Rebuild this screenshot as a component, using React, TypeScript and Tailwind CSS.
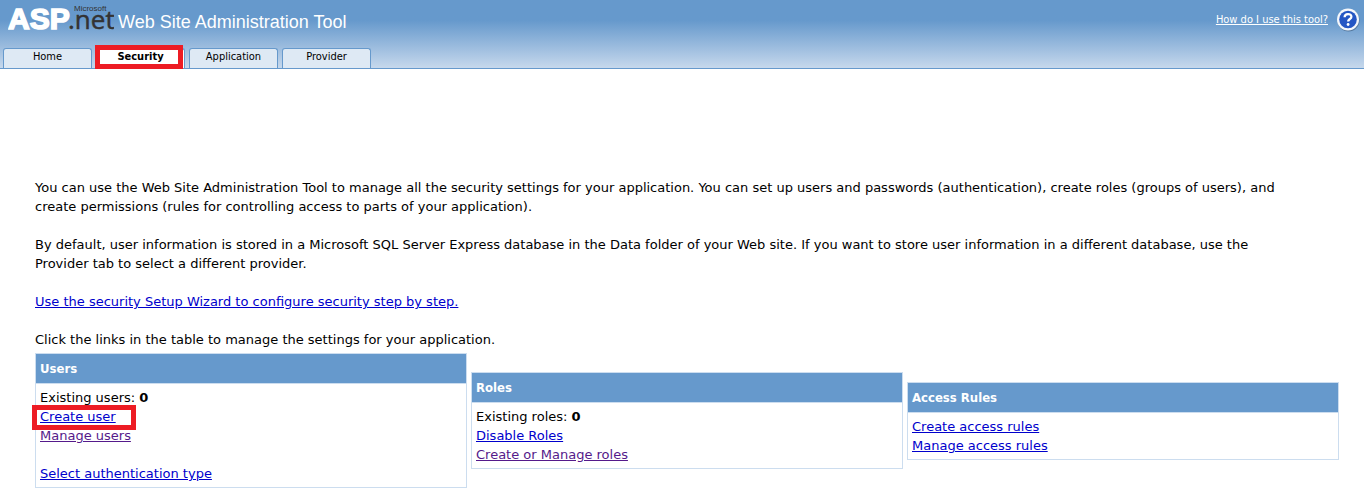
import React from 'react';

const tabs = [
  { label: 'Home', active: false },
  { label: 'Security', active: true },
  { label: 'Application', active: false },
  { label: 'Provider', active: false },
];

const linkClass = 'text-[#0000cc] underline';
const visitedClass = 'text-[#551a8b] underline';

export default function App() {
  return (
    <div className="bg-white font-['Verdana','DejaVu_Sans',sans-serif] text-[13px] leading-[19px] text-black">
      <Header />
      <main className="pt-[109px] pl-[35px] pr-[25px] pb-0.5">
        <div className="flex flex-col gap-[19px] pr-10">
          <p>
            You can use the Web Site Administration Tool to manage all the
            security settings for your application. You can set up users and
            passwords (authentication), create roles (groups of users), and
            create permissions (rules for controlling access to parts of your
            application).
          </p>
          <p>
            By default, user information is stored in a Microsoft SQL Server
            Express database in the Data folder of your Web site. If you want to
            store user information in a different database, use the Provider tab
            to select a different provider.
          </p>
          <p>
            <a href="#wizard" className={linkClass}>
              Use the security Setup Wizard to configure security step by step.
            </a>
          </p>
          <p>
            Click the links in the table to manage the settings for your
            application.
          </p>
        </div>
        <div className="mt-1 flex items-center gap-1">
          <Panel title="Users">
            <p>
              Existing users: <b>0</b>
            </p>
            <p>
              <span className="relative inline-block">
                <a href="#create-user" className={linkClass}>
                  Create user
                </a>
                <Highlight className="-left-2 -right-5 -top-0.5 -bottom-1" />
              </span>
            </p>
            <p>
              <a href="#manage-users" className={visitedClass}>
                Manage users
              </a>
            </p>
            <p className="mt-[19px]">
              <a href="#auth-type" className={linkClass}>
                Select authentication type
              </a>
            </p>
          </Panel>
          <Panel title="Roles">
            <p>
              Existing roles: <b>0</b>
            </p>
            <p>
              <a href="#disable-roles" className={linkClass}>
                Disable Roles
              </a>
            </p>
            <p>
              <a href="#manage-roles" className={visitedClass}>
                Create or Manage roles
              </a>
            </p>
          </Panel>
          <Panel title="Access Rules">
            <p>
              <a href="#create-rules" className={linkClass}>
                Create access rules
              </a>
            </p>
            <p>
              <a href="#manage-rules" className={linkClass}>
                Manage access rules
              </a>
            </p>
          </Panel>
        </div>
      </main>
    </div>
  );
}

const Header = () => (
  <header className="border-b border-[#6699cc] bg-linear-to-b from-[#6699cc] from-30% to-[#c6d8ec]">
    <div className="flex h-12 items-start justify-between pl-2 pr-1">
      <div className="flex items-start gap-1">
        <Logo />
        <h1 className="pt-3 font-['Liberation_Sans',Arial,sans-serif] text-[18px] leading-5 text-white">
          Web Site Administration Tool
        </h1>
      </div>
      <a
        href="#help"
        className="flex items-center gap-2 pt-2 font-['Tahoma','DejaVu_Sans_Condensed',sans-serif] text-[11px] leading-6 text-white"
      >
        <span className="underline">How do I use this tool?</span>
        <HelpIcon />
      </a>
    </div>
    <nav className="flex gap-1 pl-[3px] font-['Tahoma','DejaVu_Sans_Condensed',sans-serif] text-[11px] leading-4">
      {tabs.map((tab) => (
        <a
          key={tab.label}
          href={`#${tab.label.toLowerCase()}`}
          className={`relative h-5 w-[89px] rounded-t-[3px] border border-b-0 border-[#6699cc] text-center ${
            tab.active ? 'bg-white font-bold' : 'bg-[#dee9f4]'
          }`}
        >
          {tab.label}
          {tab.active && (
            <Highlight className="-left-0.5 right-px -top-1 -bottom-px" />
          )}
        </a>
      ))}
    </nav>
  </header>
);

const Panel = ({
  title,
  children,
}: {
  title: string;
  children: React.ReactNode;
}) => (
  <section className="flex-1 border border-[#ccddef]">
    <h2 className="border-b border-[#ccddef] bg-[#6699cc] px-1 py-[5px] font-['Tahoma','DejaVu_Sans_Condensed',sans-serif] text-[13px] font-bold text-white">
      {title}
    </h2>
    <div className="p-1">{children}</div>
  </section>
);

// red marker frame drawn over a control
const Highlight = ({ className }: { className: string }) => (
  <span
    className={`pointer-events-none absolute border-5 border-[#ed1c24] ${className}`}
  />
);

const Logo = () => (
  <svg
    width="106"
    height="36"
    viewBox="0 0 106 36"
    role="img"
    aria-label="Microsoft ASP.net"
  >
    <text
      x="0"
      y="29"
      fill="#fff"
      stroke="#fff"
      strokeWidth="1.6"
      fontSize="30"
      fontWeight="bold"
      fontFamily="Liberation Sans, Arial, sans-serif"
    >
      ASP
    </text>
    <text
      x="60"
      y="29"
      fill="#333"
      stroke="#333"
      strokeWidth="0.5"
      fontSize="26"
      fontFamily="Open Sans, sans-serif"
    >
      .net
    </text>
    <text
      x="66"
      y="11"
      fill="#333"
      fontSize="8"
      fontFamily="Liberation Sans, Arial, sans-serif"
    >
      Microsoft
    </text>
  </svg>
);

const HelpIcon = () => (
  <svg width="24" height="24" viewBox="0 0 24 24" aria-hidden="true">
    <circle cx="12.5" cy="12.5" r="11" fill="#56799f" />
    <circle cx="12" cy="11.5" r="11" fill="#f4f7fb" />
    <circle cx="12" cy="11.5" r="8.8" fill="#2456c4" />
    <path
      d="M8.6 9.3c0-4.3 6.8-4.2 6.8-.6 0 2.3-3.3 2.4-3.3 4.9"
      fill="none"
      stroke="#fff"
      strokeWidth="2.3"
    />
    <circle cx="12.1" cy="16.5" r="1.4" fill="#fff" />
  </svg>
);
